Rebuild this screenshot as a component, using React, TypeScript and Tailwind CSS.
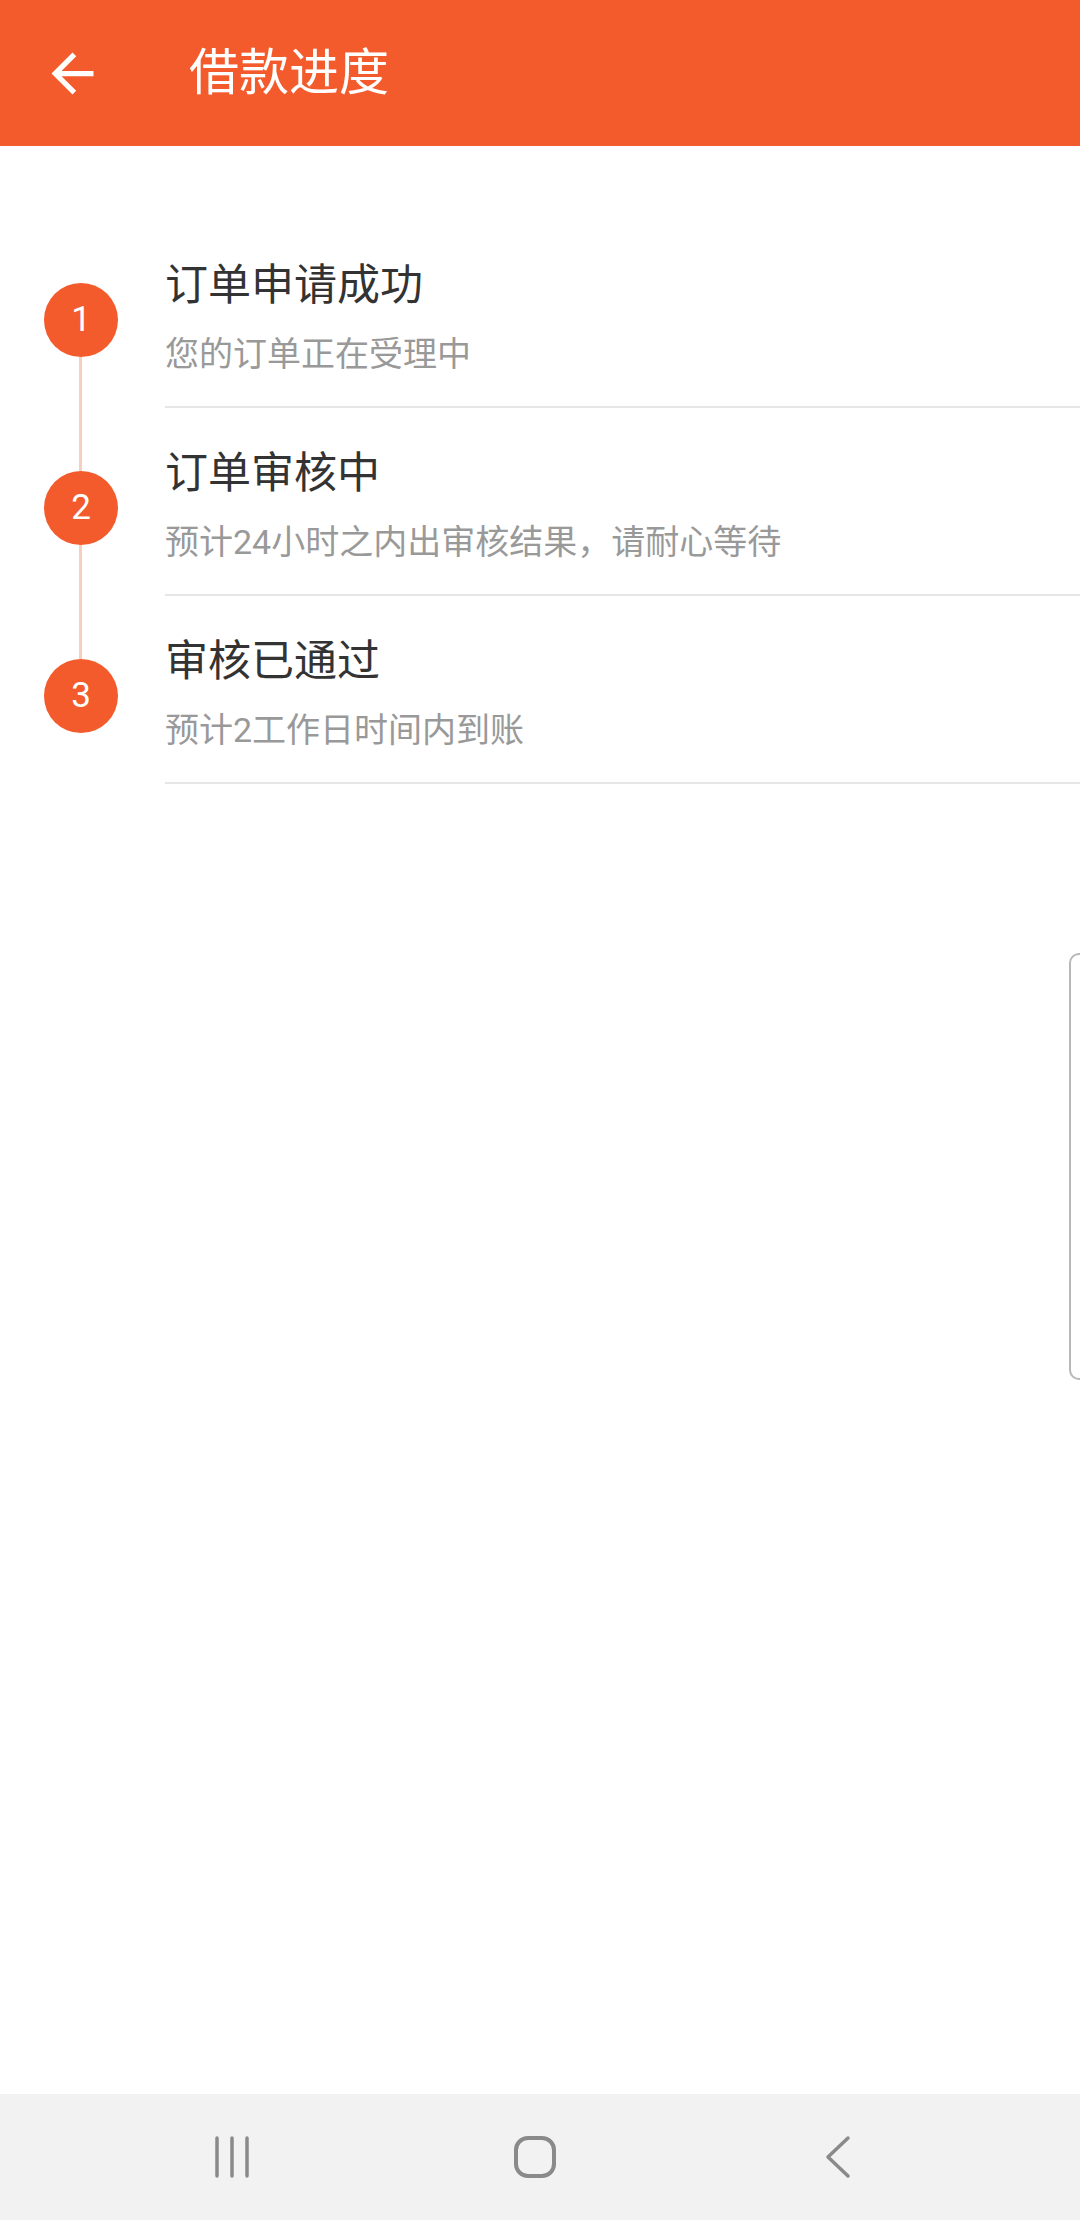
import React from "react";

const steps = [
  { n: "1", title: "订单申请成功", sub: "您的订单正在受理中" },
  { n: "2", title: "订单审核中", sub: "预计24小时之内出审核结果，请耐心等待" },
  { n: "3", title: "审核已通过", sub: "预计2工作日时间内到账" },
];

const FONT = { fontFamily: 'Roboto, "Noto Sans CJK SC", sans-serif' };

export default function App() {
  return (
    <div className="relative flex h-[2220px] w-[1080px] flex-col overflow-hidden bg-white" style={FONT}>
      {/* Header */}
      <div className="flex h-[146px] shrink-0 items-center bg-[#F45B2C]">
        <div className="ml-[41px] flex h-[63px] w-[63px] items-center justify-center">
          <svg viewBox="0 0 24 24" width="63" height="63" fill="#ffffff">
            <path d="M20 11H7.83l5.59-5.59L12 4l-8 8 8 8 1.41-1.41L7.83 13H20v-2z" />
          </svg>
        </div>
        <div className="ml-[85px] text-[50px] leading-[60px] text-white" style={FONT}>
          借款进度
        </div>
      </div>

      {/* Steps */}
      <div className="flex flex-1 flex-col pt-[74px]">
        {steps.map((s, i) => (
          <div key={s.n} className="flex h-[188px]">
            <div className="flex w-[165px] shrink-0 flex-col">
              <div className="ml-[79px] h-[63px] w-[3px] shrink-0" style={{ backgroundColor: i === 0 ? "transparent" : "#F7CFBD" }} />
              <div className="ml-[44px] flex h-[74px] w-[74px] shrink-0 items-center justify-center rounded-full bg-[#F45B2C] text-[35px] text-white" style={{ fontFamily: "Roboto, sans-serif" }}>
                {s.n}
              </div>
              <div className="ml-[79px] w-[3px] flex-1" style={{ backgroundColor: i === steps.length - 1 ? "transparent" : "#F7CFBD" }} />
            </div>
            <div className="flex flex-1 flex-col border-b-2 border-[#E6E6E6] pt-[37px]">
              <div className="text-[43px] leading-[56px] text-[#333333]">{s.title}</div>
              <div className="mt-[19px] text-[34px] leading-[44px] text-[#999999]">{s.sub}</div>
            </div>
          </div>
        ))}
      </div>

      {/* Edge panel handle */}
      <div className="absolute left-[1069px] top-[953px] h-[427px] w-[30px] rounded-[10px] border-2 border-[#B8B8B8] bg-white" />

      {/* Nav bar */}
      <div className="flex h-[126px] shrink-0 items-center gap-[203px] bg-[#F2F2F2] pl-[182px]">
        <div className="flex w-[100px] justify-center">
          <svg width="40" height="42" viewBox="0 0 40 42" fill="none" stroke="#8A8A8A" strokeWidth="3.5" strokeLinecap="round">
            <line x1="5" y1="2" x2="5" y2="40" />
            <line x1="20" y1="2" x2="20" y2="40" />
            <line x1="35" y1="2" x2="35" y2="40" />
          </svg>
        </div>
        <div className="flex w-[100px] justify-center">
          <svg width="44" height="44" viewBox="0 0 44 44" fill="none" stroke="#8A8A8A" strokeWidth="4">
            <rect x="3" y="3" width="38" height="38" rx="12" />
          </svg>
        </div>
        <div className="flex w-[100px] justify-center">
          <svg width="28" height="44" viewBox="0 0 28 44" fill="none" stroke="#8A8A8A" strokeWidth="3.5" strokeLinecap="round" strokeLinejoin="round">
            <polyline points="24,3 4,22 24,41" />
          </svg>
        </div>
      </div>
    </div>
  );
}
